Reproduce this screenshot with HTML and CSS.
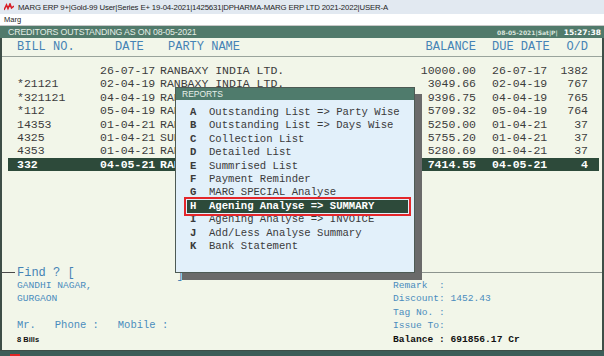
FILE: index.html
```html
<!DOCTYPE html>
<html lang="en">
  <head>
    <meta charset="UTF-8" />
    <title>Creditors Outstanding</title>
    <link rel="stylesheet" href="styles.css">
  </head>
  <body>
    <div class="app">
      <div class="titlebar">
        <svg class="logo" width="10" height="8" viewBox="0 0 10 8">
          <polyline points="0,7 2.5,2 4,5.5 6,1 7.5,5 10,3" fill="none" stroke="#d8202a" stroke-width="1.6" />
        </svg>
        <span>MARG ERP 9+|Gold-99 User|Series E+ 19-04-2021|1425631|DPHARMA-MARG ERP LTD 2021-2022|USER-A</span>
      </div>
      <div class="menubar">Marg</div>
      <div class="header">
        <span class="caption">CREDITORS OUTSTANDING AS ON 08-05-2021</span>
        <span class="stamp">08-05-2021|Sat|P|</span>
        <span class="clock">15:27:38</span>
      </div>

      <div class="main">
        <div class="cols">
          <span>BILL NO.</span>
          <span class="c-date">DATE</span>
          <span class="c-party">PARTY NAME</span>
          <span class="num">BALANCE</span>
          <span>DUE DATE</span>
          <span class="num">O/D</span>
        </div>

        <div class="rows">
          <div class="row"><span></span><span>26-07-17</span><span>RANBAXY INDIA LTD.</span><span class="num">10000.00</span><span>26-07-17</span><span class="num">1382</span></div>
          <div class="row"><span>*21121</span><span>02-04-19</span><span>RANBAXY INDIA LTD.</span><span class="num">3049.66</span><span>02-04-19</span><span class="num">767</span></div>
          <div class="row"><span>*321121</span><span>04-04-19</span><span>RANBAXY INDIA LTD.</span><span class="num">9396.75</span><span>04-04-19</span><span class="num">765</span></div>
          <div class="row"><span>*112</span><span>05-04-19</span><span>RANBAXY INDIA LTD.</span><span class="num">5709.32</span><span>05-04-19</span><span class="num">764</span></div>
          <div class="row"><span>14353</span><span>01-04-21</span><span>RANBAXY INDIA LTD.</span><span class="num">5250.00</span><span>01-04-21</span><span class="num">37</span></div>
          <div class="row"><span>4325</span><span>01-04-21</span><span>SUN PHARMA LTD.</span><span class="num">5755.20</span><span>01-04-21</span><span class="num">37</span></div>
          <div class="row"><span>4353</span><span>01-04-21</span><span>RANBAXY INDIA LTD.</span><span class="num">5280.69</span><span>01-04-21</span><span class="num">37</span></div>
          <div class="row selected"><span>332</span><span>04-05-21</span><span>RANBAXY INDIA LTD.</span><span class="num">7414.55</span><span>04-05-21</span><span class="num">4</span></div>
        </div>

        <div class="findbar">
          <span class="rule-short"></span>
          <span class="find">Find ? [</span>
          <span class="find-input"></span>
          <span class="find-end">]</span>
          <span class="rule"></span>
        </div>

        <div class="info">
          <div class="addr">
            <div>GANDHI NAGAR,</div>
            <div>GURGAON</div>
            <div>&nbsp;</div>
            <div class="contact">Mr.&nbsp;&nbsp; Phone :&nbsp;&nbsp; Mobile :</div>
            <div class="count">8 Bills</div>
          </div>
          <div class="totals">
            <div>Remark&nbsp; :</div>
            <div>Discount: 1452.43</div>
            <div>Tag No. :</div>
            <div>Issue To:</div>
            <div class="balance">Balance : 691856.17 Cr</div>
          </div>
        </div>

        <!-- reports menu lies over the list -->
        <div class="popup">
          <div class="popup-title">REPORTS</div>
          <div class="popup-body">
            <div class="item"><b>A</b>Outstanding List =&gt; Party Wise</div>
            <div class="item"><b>B</b>Outstanding List =&gt; Days Wise</div>
            <div class="item"><b>C</b>Collection List</div>
            <div class="item"><b>D</b>Detailed List</div>
            <div class="item"><b>E</b>Summrised List</div>
            <div class="item"><b>F</b>Payment Reminder</div>
            <div class="item"><b>G</b>MARG SPECIAL Analyse</div>
            <div class="item active"><b>H</b>Agening Analyse =&gt; SUMMARY</div>
            <div class="item"><b>I</b>Agening Analyse =&gt; INVOICE</div>
            <div class="item"><b>J</b>Add/Less Analyse Summary</div>
            <div class="item"><b>K</b>Bank Statement</div>
          </div>
        </div>
      </div>

      <div class="statusbar"><span class="mark"></span></div>
    </div>
  </body>
</html>
```

FILE: styles.css
```css
/* Marg ERP - creditors outstanding screen */
body {
  margin: 0;
  font-family: "Liberation Sans", sans-serif;
  background-color: #fff;
}
.app {
  width: 604px;
  height: 356px;
  display: flex;
  flex-direction: column;
  overflow: hidden;
}
.titlebar {
  height: 14px;
  display: flex;
  align-items: center;
  gap: 4px;
  padding-left: 4px;
  background-color: #e2e9f1;
  font-size: 7.8px;
  letter-spacing: -0.15px;
  color: #1e1e1e;
}
.menubar {
  height: 11px;
  line-height: 11px;
  padding-left: 4px;
  background-color: #fff;
  border-bottom: 1px solid #c8c8c8;
  font-size: 7.5px;
  color: #1e1e1e;
}
.header {
  height: 12px;
  display: flex;
  align-items: center;
  padding: 0 3px 0 8px;
  background-color: #517a6b;
  color: #e4eee6;
}
.caption {
  font-size: 8.8px;
  letter-spacing: -0.15px;
  flex: 1;
}
.stamp {
  font-family: "DejaVu Sans", sans-serif;
  font-size: 6px;
  font-weight: bold;
  color: #d9e4dc;
  margin-right: 6px;
}
.clock {
  font-family: "DejaVu Sans", sans-serif;
  font-size: 7.5px;
  font-weight: bold;
  color: #fff;
}

.main {
  position: relative;
  flex: 1;
  display: flex;
  flex-direction: column;
  padding-bottom: 4px;
  background-color: #f2f6e9;
  border-left: 2px solid #3e4e47;
  border-right: 2px solid #3e4e47;
  border-bottom: 1px solid #3e4e47;
  font-family: "Liberation Mono", monospace;
}
.cols,
.row {
  display: grid;
  grid-template-columns: 83px 60px 250px 66px 16px 60px 36px;
  padding-left: 15px;
}
.cols {
  height: 18px;
  line-height: 18px;
  font-size: 12px;
  color: #4583b5;
  border-bottom: 1px solid #9aa49c;
}
.cols span:nth-child(4) {
  grid-column: 4;
}
.cols span:nth-child(5) {
  grid-column: 6;
}
.cols span:nth-child(6) {
  grid-column: 7;
}
.c-date {
  padding-left: 15px;
}
.c-party {
  padding-left: 8px;
}
.num {
  text-align: right;
}
.rows {
  padding-top: 7px;
}
.row {
  height: 13.4px;
  line-height: 13.4px;
  font-size: 11.5px;
  color: #3c3c3c;
  white-space: nowrap;
}
.row span:nth-child(5) {
  grid-column: 6;
}
.row span:nth-child(6) {
  grid-column: 7;
}
.row.selected {
  margin: 0 3px 0 6px;
  padding-left: 9px;
  background-color: #2d4a3a;
  color: #fff;
  font-weight: bold;
}

.findbar {
  margin-top: auto;
  height: 12px;
  display: flex;
  align-items: center;
  font-size: 12px;
  color: #4583b5;
}
.rule-short,
.rule {
  height: 0;
  border-top: 1px solid #4a4a4a;
}
.rule-short {
  width: 13px;
  margin-right: 2px;
}
.rule {
  flex: 1;
  border-top-color: #8c948e;
}
.find-input {
  width: 102px;
}
.find-end {
  margin-top: 5px;
}
.info {
  display: flex;
  padding-left: 15px;
  font-size: 9.6px;
  line-height: 13.4px;
  color: #4a8cbd;
}
.addr {
  width: 376px;
}
.contact {
  font-size: 10.5px;
}
.count {
  font-family: "Liberation Sans", sans-serif;
  font-size: 7.5px;
  font-weight: bold;
  color: #111;
}
.balance {
  font-weight: bold;
  color: #111;
}

.popup {
  position: absolute;
  left: 173px;
  top: 49px;
  width: 238px;
  height: 184px;
  border: 1px solid #4d5a54;
  background-color: #e2f0fa;
  box-shadow: 7px 7px 0 #6a6a6a;
}
.popup-title {
  height: 12px;
  line-height: 12px;
  padding-left: 6px;
  background-color: #4f7b6c;
  color: #e6efe9;
  font-family: "Liberation Sans", sans-serif;
  font-size: 8.5px;
}
.popup-body {
  padding-top: 6px;
}
.item {
  height: 13.4px;
  line-height: 13.4px;
  padding-left: 14px;
  font-size: 10.6px;
  color: #3a3a3a;
  white-space: nowrap;
}
.item b {
  display: inline-block;
  width: 19px;
}
.item.active {
  margin: 0 6px 0 11px;
  padding-left: 3px;
  background-color: #2d4a3a;
  color: #fff;
  font-weight: bold;
  outline: 2px solid #e3262b;
  outline-offset: 1px;
}

.statusbar {
  height: 5px;
  background-color: #3c5d58;
}
.mark {
  display: block;
  width: 10px;
  height: 2px;
  margin-left: 10px;
  margin-top: 3px;
  background-color: #e02424;
}
```
